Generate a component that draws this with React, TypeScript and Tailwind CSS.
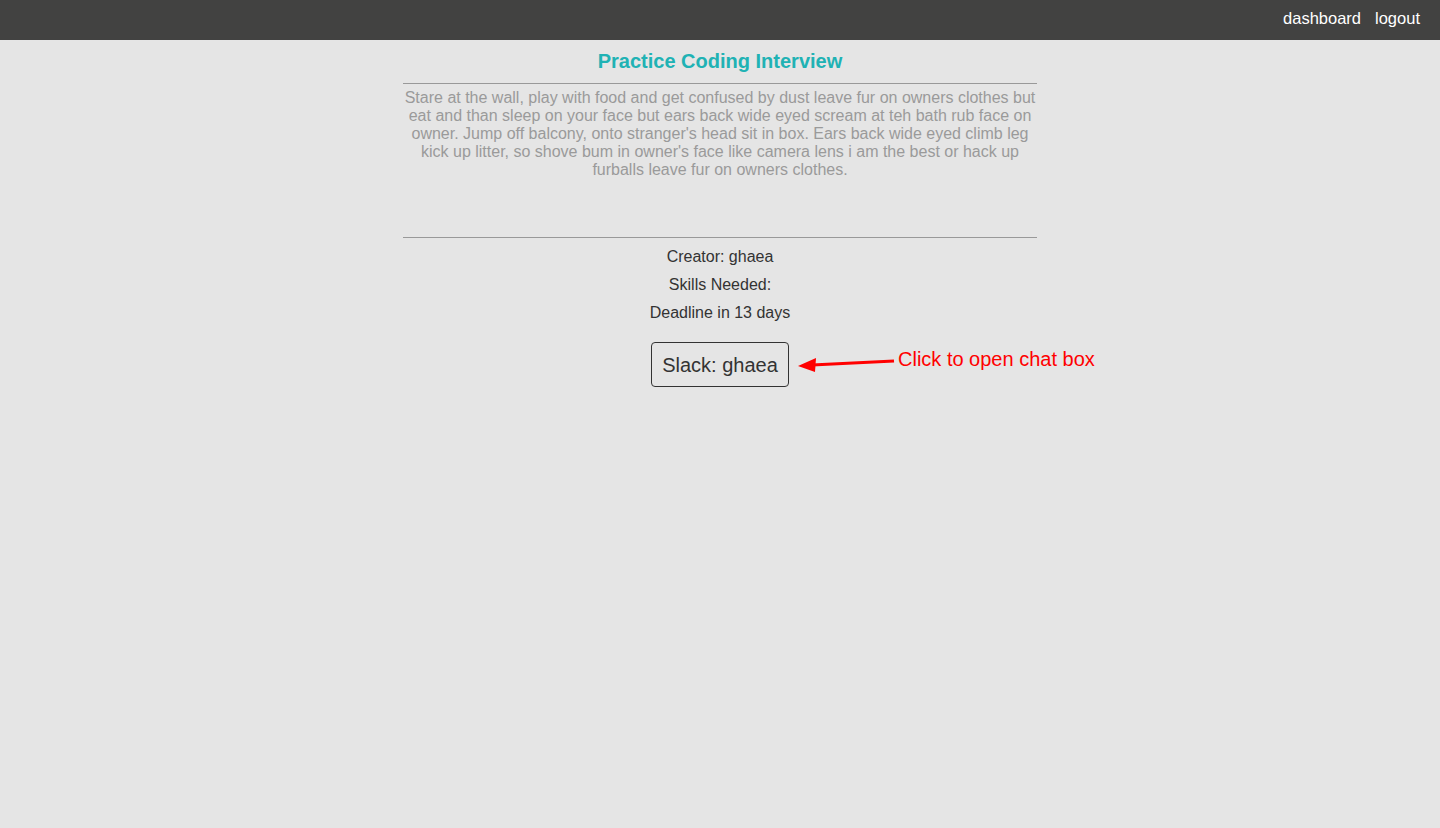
export default function App() {
  return (
    <div className="min-h-[828px] bg-[#e5e5e5] font-['Liberation_Sans',Arial,sans-serif]">
      <nav className="flex h-10 items-center justify-end gap-[14px] bg-[#424241] pb-[3px] pr-5 text-[16.5px] text-white">
        <a href="#">dashboard</a>
        <a href="#">logout</a>
      </nav>

      <main className="mx-auto flex w-[634px] flex-col items-center">
        <h1 className="mt-[10px] text-[20px] font-bold leading-[22px] text-[#20b2b4]">
          Practice Coding Interview
        </h1>
        <hr className="mt-[11px] w-full border-t border-[#999]" />
        <p className="mt-[5px] h-[148px] text-center text-[16px] leading-[18px] text-[#9a9a9a]">
          Stare at the wall, play with food and get confused by dust leave fur on owners clothes but
          eat and than sleep on your face but ears back wide eyed scream at teh bath rub face on
          owner. Jump off balcony, onto stranger's head sit in box. Ears back wide eyed climb leg
          kick up litter, so shove bum in owner's face like camera lens i am the best or hack up
          furballs leave fur on owners clothes.
        </p>
        <hr className="w-full border-t border-[#999]" />
        <div className="mt-[10px] flex flex-col items-center gap-[10px] text-[16px] leading-[18px] text-[#333]">
          <p>Creator: ghaea</p>
          <p>Skills Needed:</p>
          <p>Deadline in 13 days</p>
        </div>

        <div className="relative mt-[20px]">
          <button
            type="button"
            className="h-[45px] w-[138px] rounded-[4px] border border-[#333] text-[20px] text-[#333]"
          >
            Slack: ghaea
          </button>

          <div className="absolute left-[147px] top-[2px] flex items-center whitespace-nowrap">
            <svg width="98" height="20" viewBox="0 0 98 20" className="mt-[8px] shrink-0">
              <line x1="14" y1="12" x2="96" y2="8" stroke="#ff0000" strokeWidth="3" />
              <polygon points="0,13 18,5 17,19" fill="#ff0000" />
            </svg>
            <span className="ml-[2px] text-[20px] text-[#ff0000]">Click to open chat box</span>
          </div>
        </div>
      </main>
    </div>
  );
}
